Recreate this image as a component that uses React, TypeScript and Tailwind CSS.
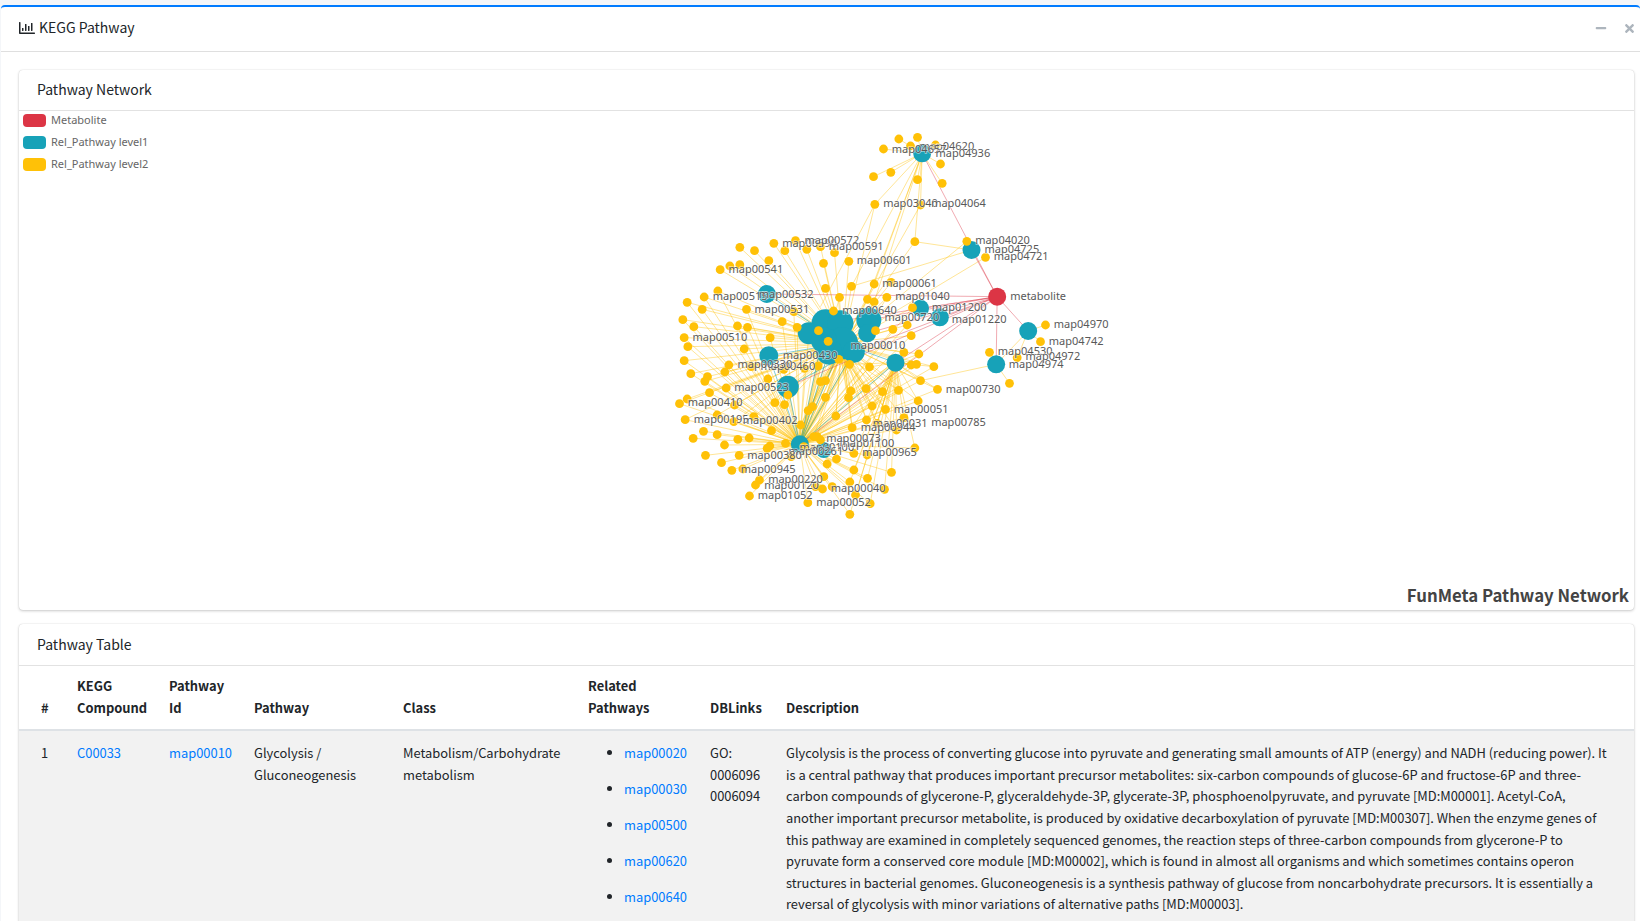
import React from "react";
import { FaMinus, FaRegChartBar, FaTimes } from "react-icons/fa";

type Pt = [number, number];

// node positions were read off two crops of the graph, these put them back on page coords
const upper = ([x, y]: Pt): Pt => [660 + x / 3, 120 + y / 3];
const lower = ([x, y]: Pt): Pt => [660 + x / 3, 310 + y / 3];

const topDots: Pt[] = ([
  [715, 57], [771, 52], [825, 75], [669, 87], [750, 78], [840, 132], [691, 157], [639, 170], [771, 179], [845, 190],
] as Pt[]).map(upper);

const upperDots: Pt[] = ([
  [643, 253], [780, 255], [763, 365], [919, 364], [975, 412], [405, 362], [340, 370], [238, 382], [282, 392],
  [373, 392], [439, 388], [480, 380], [522, 398], [565, 424], [489, 430], [325, 422], [238, 434], [208, 438],
  [179, 449], [172, 513], [131, 531], [80, 547], [125, 568], [258, 568], [495, 505], [573, 499], [641, 492],
  [692, 487], [537, 532], [679, 532], [621, 538], [641, 546], [519, 573], [756, 563], [400, 575],
] as Pt[]).map(upper);

const lowerDots: Pt[] = ([
  [67, 29], [100, 50], [231, 48], [261, 52], [365, 35], [410, 52], [474, 62], [503, 94], [645, 62], [697, 58],
  [740, 45], [752, 77], [71, 83], [82, 110], [329, 83], [251, 117], [71, 152], [91, 191], [205, 165], [193, 186],
  [141, 200], [133, 214], [197, 234], [147, 248], [80, 267], [57, 281], [74, 329], [129, 364], [98, 385], [170, 374],
  [232, 388], [266, 384], [192, 405], [135, 436], [236, 436], [183, 458], [214, 481], [297, 510], [285, 525], [267, 558],
  [442, 578], [629, 581], [568, 613], [486, 537], [672, 538], [585, 555], [568, 516], [621, 505], [580, 480], [693, 487],
  [528, 447], [500, 462], [580, 430], [620, 435], [763, 414], [708, 360], [730, 323], [650, 340], [618, 330], [575, 353],
  [675, 298], [635, 288], [773, 273], [831, 238], [714, 241], [666, 245], [617, 236], [571, 243], [564, 263], [526, 318],
  [495, 262], [495, 212], [480, 215], [456, 290], [443, 302], [420, 345], [470, 380], [375, 400], [328, 408], [333, 362],
  [372, 284], [343, 278], [382, 255], [322, 207], [272, 170], [370, 178], [432, 175], [473, 168], [535, 148], [567, 163],
  [627, 171], [752, 165], [768, 163], [780, 212], [820, 170], [775, 132], [730, 127], [320, 415], [222, 285], [220, 335],
  [280, 320], [392, 440], [430, 410], [480, 390], [460, 380], [490, 500], [515, 530], [465, 530], [247, 477], [170, 315],
] as Pt[]).map(lower);

const sideDots: Pt[] = ([[1047, 220], [987, 127], [1140, 95], [1155, 45], [1070, 143]] as Pt[]).map(lower);

const hubTop = upper([785, 100]);
const hubLeft = upper([933, 390]);
const hubMid = upper([319, 522]);
const hubBottom = lower([418, 403]);
const hubCluster = lower([545, 100]);
const hubRight = lower([705, 158]);
const metabolite = upper([1010, 530]);

const cluster: [number, number, number][] = [
  ...([
    [495, 40, 14], [540, 40, 13], [625, 30, 12.5], [445, 70, 11], [545, 100, 16], [505, 125, 13], [580, 125, 11],
    [620, 70, 9], [490, 90, 13],
  ] as [number, number, number][]).map(([x, y, r]): [number, number, number] => [660 + x / 3, 310 + y / 3, r]),
];

const tealHubs: [number, number, number][] = [
  [...hubTop, 9], [...hubLeft, 9], [...hubMid, 9], [...upper([780, 565]), 8.5], [...upper([838, 592]), 9],
  [...lower([325, 137]), 9.5], [...lower([382, 230]), 11], [...hubRight, 9], [...lower([1007, 163]), 9],
  [...lower([1103, 63]), 9], [...hubBottom, 9], [...lower([490, 420]), 8],
];

const labels: [string, number, number][] = [
  ...([
    ["map04620", 780, 80], ["map04657", 697, 87], ["map04936", 828, 99], ["map03040", 671, 251], ["map04064", 815, 251],
    ["map04020", 947, 361], ["map04725", 975, 388], ["map04721", 1003, 410], ["map00590", 368, 370], ["map00572", 435, 362],
    ["map00591", 508, 378], ["map00601", 592, 422], ["map00541", 207, 447], ["map00515", 160, 530], ["map00532", 298, 524],
    ["map00531", 285, 568], ["map00061", 668, 491], ["map01040", 707, 530], ["map00640", 548, 571], ["map01200", 817, 561],
    ["map00720", 675, 592], ["map01220", 877, 597], ["metabolite", 1052, 530],
  ] as [string, number, number][]).map(([t, x, y]): [string, number, number] => [t, ...upper([x, y])]),
  ...([
    ["map00510", 99, 81], ["map00430", 370, 135], ["map00010", 573, 107], ["map00460", 303, 170], ["map00330", 234, 162],
    ["map00523", 224, 233], ["map00410", 85, 278], ["map00195", 103, 327], ["map00402", 250, 332], ["map00730", 859, 237],
    ["map00051", 703, 297], ["map00031", 640, 340], ["map00785", 815, 337], ["map00944", 604, 352], ["map00100", 420, 412],
    ["map01100", 540, 400], ["map00073", 500, 384], ["map00261", 387, 425], ["map00380", 263, 435], ["map00965", 608, 427],
    ["map00945", 244, 479], ["map00120", 314, 525], ["map00220", 326, 507], ["map01052", 295, 557], ["map00040", 514, 535],
    ["map00052", 470, 576], ["map04970", 1183, 44], ["map04742", 1168, 95], ["map04530", 1015, 125], ["map04974", 1048, 163],
    ["map04972", 1098, 140],
  ] as [string, number, number][]).map(([t, x, y]): [string, number, number] => [t, ...lower([x, y])]),
];

const graphDots = [...upperDots, ...lowerDots];

const yellowEdges: [Pt, Pt][] = [
  ...topDots.map((p): [Pt, Pt] => [p, hubTop]),
  ...([upper([643, 253]), upper([780, 255]), upper([763, 365]), upper([573, 499]), upper([621, 538]), upper([641, 492]), upper([641, 546])] as Pt[]).map(
    (p): [Pt, Pt] => [p, hubTop],
  ),
  [upper([763, 365]), hubLeft],
  [upper([573, 499]), hubLeft],
  [upper([643, 253]), upper([480, 560])],
  [lower([1007, 163]), lower([780, 212])],
  [lower([1103, 63]), lower([1007, 163])],
  ...sideDots.map((p, i): [Pt, Pt] => [p, i < 2 ? lower([1007, 163]) : lower([1103, 63])]),
  ...graphDots.filter(([, y]) => y < 430).map((p): [Pt, Pt] => [p, hubCluster]),
  ...graphDots.filter(([, y]) => y > 290).map((p): [Pt, Pt] => [p, hubBottom]),
  ...graphDots.filter(([x, y]) => x > 840 && y > 340).map((p): [Pt, Pt] => [p, hubRight]),
  // the dense fan between the cluster and the lower hub
  ...cluster.map(([x, y]): [Pt, Pt] => [[x, y], hubBottom]),
  ...graphDots.filter(([x, y]) => x > 790 && x < 900 && y > 330 && y < 440).map(([x, y]): [Pt, Pt] => [[x, y], lower([540, 130])]),
];

const tealEdges: [Pt, Pt][] = [
  [hubCluster, hubBottom], [lower([495, 40]), hubBottom], [lower([505, 125]), hubBottom], [lower([580, 125]), hubBottom],
  [hubCluster, hubRight], [lower([580, 125]), lower([382, 230])], [lower([325, 137]), hubBottom], [lower([382, 230]), hubBottom],
  [hubMid, hubCluster], [hubRight, hubBottom], [lower([325, 137]), hubCluster],
];

const redEdges: [Pt, Pt][] = [
  [metabolite, hubTop], [metabolite, hubLeft], [metabolite, hubMid], [metabolite, upper([780, 565])],
  [metabolite, upper([838, 592])], [metabolite, lower([625, 30])], [metabolite, lower([580, 125])], [metabolite, hubRight],
  [metabolite, hubBottom], [metabolite, lower([1103, 63])], [metabolite, lower([1007, 163])], [metabolite, lower([495, 40])],
  [metabolite, lower([382, 230])], [metabolite, lower([620, 70])],
];

const legend = [
  { name: "Metabolite", color: "bg-[#dc3545]" },
  { name: "Rel_Pathway level1", color: "bg-[#17a2b8]" },
  { name: "Rel_Pathway level2", color: "bg-[#ffc107]" },
];

const related = ["map00020", "map00030", "map00500", "map00620", "map00640"];

const description =
  "Glycolysis is the process of converting glucose into pyruvate and generating small amounts of ATP (energy) and NADH (reducing power). It is a central pathway that produces important precursor metabolites: six-carbon compounds of glucose-6P and fructose-6P and three-carbon compounds of glycerone-P, glyceraldehyde-3P, glycerate-3P, phosphoenolpyruvate, and pyruvate [MD:M00001]. Acetyl-CoA, another important precursor metabolite, is produced by oxidative decarboxylation of pyruvate [MD:M00307]. When the enzyme genes of this pathway are examined in completely sequenced genomes, the reaction steps of three-carbon compounds from glycerone-P to pyruvate form a conserved core module [MD:M00002], which is found in almost all organisms and which sometimes contains operon structures in bacterial genomes. Gluconeogenesis is a synthesis pathway of glucose from noncarbohydrate precursors. It is essentially a reversal of glycolysis with minor variations of alternative paths [MD:M00003].";

const Edges: React.FC<{ items: [Pt, Pt][]; stroke: string }> = ({ items, stroke }) => (
  <g stroke={stroke} strokeWidth={1}>
    {items.map(([a, b], i) => (
      <line key={i} x1={a[0]} y1={a[1]} x2={b[0]} y2={b[1]} />
    ))}
  </g>
);

const PathwayGraph: React.FC = () => (
  <svg viewBox="19 111 1614 499" className="block h-full w-full">
    <Edges items={yellowEdges} stroke="rgba(255,193,7,0.42)" />
    <Edges items={tealEdges} stroke="rgba(23,162,184,0.55)" />
    <Edges items={redEdges} stroke="rgba(220,53,69,0.42)" />
    {[...tealHubs, ...cluster].map(([x, y, r], i) => (
      <circle key={i} cx={x} cy={y} r={r} fill="#17a2b8" />
    ))}
    {[...topDots, ...graphDots, ...sideDots].map(([x, y], i) => (
      <circle key={i} cx={x} cy={y} r={4.4} fill="#ffc107" />
    ))}
    <circle cx={metabolite[0]} cy={metabolite[1]} r={9} fill="#dc3545" />
    {labels.map(([text, x, y]) => (
      <text
        key={text}
        x={x - 1}
        y={y - 1}
        dominantBaseline="central"
        fontSize={11}
        fill="#595959"
        stroke="rgba(255,255,255,0.55)"
        strokeWidth={1.5}
        paintOrder="stroke"
        className="font-['Noto_Sans',sans-serif]"
      >
        {text}
      </text>
    ))}
  </svg>
);

const App: React.FC = () => {
  return (
    <div className="h-screen overflow-hidden bg-[#f4f6f9] pl-px pt-[5px] font-['Noto_Sans_CJK_SC','Noto_Sans',sans-serif] text-[12.9px] leading-[21.6px] text-[#212529]">
      <div className="h-[1000px] rounded-t border-t-2 border-[#007bff] bg-white">
        <div className="flex h-[45px] items-center justify-between border-b border-[#dfdfdf] pb-[2px] pl-[18px] pr-[5px]">
          <div className="flex items-center gap-[4px] text-[14px]">
            <FaRegChartBar className="h-[16px] w-[16px]" />
            <span>KEGG Pathway</span>
          </div>
          <div className="flex items-center gap-[17px] text-[#adb5bd]">
            <FaMinus className="h-[12px] w-[12px]" />
            <FaTimes className="h-[13px] w-[11px]" />
          </div>
        </div>

        <div className="flex flex-col gap-[14px] pl-[18px] pr-[6px] pt-[18px]">
          <section className="relative h-[540px] rounded bg-white shadow-[0_0_1px_rgba(0,0,0,0.2),0_1px_3px_rgba(0,0,0,0.2)]">
            <div className="flex h-[41px] items-center border-b border-[#e2e2e2] pl-[18px] text-[14px]">Pathway Network</div>
            <div className="h-[499px]">
              <PathwayGraph />
            </div>
            <div className="absolute left-[4px] top-[44px] flex flex-col gap-[9px]">
              {legend.map((item) => (
                <div key={item.name} className="flex h-[13px] items-center gap-[5px] font-['Noto_Sans',sans-serif] text-[11px] text-[#666666]">
                  <span className={`h-[13px] w-[23px] rounded-sm ${item.color}`} />
                  <span className="-mt-[2px]">{item.name}</span>
                </div>
              ))}
            </div>
            <div className="absolute bottom-[3px] right-[5px] text-[16.8px] font-bold leading-[24px] text-[#444444]">FunMeta Pathway Network</div>
          </section>

          <section className="rounded bg-white shadow-[0_0_1px_rgba(0,0,0,0.2),0_1px_3px_rgba(0,0,0,0.2)]">
            <div className="flex h-[42px] items-center border-b border-[#e2e2e2] pl-[18px] text-[14px]">Pathway Table</div>
            <table className="w-full table-fixed border-collapse text-left">
              <thead>
                <tr className="border-b-2 border-[#dee2e6] align-bottom font-bold">
                  <th className="w-[46px] pb-[11px] pl-[22px] pt-[9px]">#</th>
                  <th className="w-[92px] px-3 pb-[11px] pt-[9px]">KEGG Compound</th>
                  <th className="w-[85px] px-3 pb-[11px] pt-[9px]">Pathway Id</th>
                  <th className="w-[149px] px-3 pb-[11px] pt-[9px]">Pathway</th>
                  <th className="w-[185px] px-3 pb-[11px] pt-[9px]">Class</th>
                  <th className="w-[122px] px-3 pb-[11px] pt-[9px]">Related Pathways</th>
                  <th className="w-[76px] px-3 pb-[11px] pt-[9px]">DBLinks</th>
                  <th className="px-3 pb-[11px] pt-[9px]">Description</th>
                </tr>
              </thead>
              <tbody>
                <tr className="bg-[#f2f2f2] align-top">
                  <td className="pb-[10px] pl-[22px] pt-[11px]">1</td>
                  <td className="px-3 pb-[10px] pt-[11px] text-[#007bff]">C00033</td>
                  <td className="px-3 pb-[10px] pt-[11px] text-[#007bff]">map00010</td>
                  <td className="px-3 pb-[10px] pt-[11px]">Glycolysis / Gluconeogenesis</td>
                  <td className="px-3 pb-[10px] pt-[11px]">Metabolism/Carbohydrate metabolism</td>
                  <td className="px-3 pb-[10px] pt-[11px]">
                    <ul className="list-disc pl-[36px]">
                      {related.map((m) => (
                        <li key={m} className="mb-[14.4px] text-[#007bff] marker:text-[#212529]">
                          {m}
                        </li>
                      ))}
                    </ul>
                  </td>
                  <td className="px-3 pb-[10px] pt-[11px]">
                    GO:
                    <br />
                    0006096
                    <br />
                    0006094
                  </td>
                  <td className="pb-[10px] pl-3 pr-[24px] pt-[11px]">{description}</td>
                </tr>
              </tbody>
            </table>
          </section>
        </div>
      </div>
    </div>
  );
};

export default App;
